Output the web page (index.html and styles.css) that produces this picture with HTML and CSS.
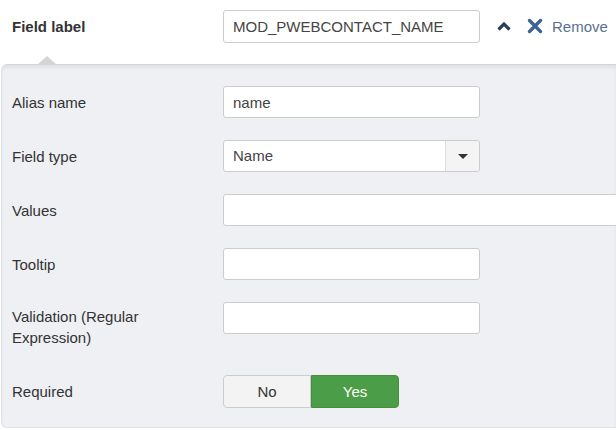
FILE: index.html
```html
<!DOCTYPE html>
<html lang="en">
<head>
    <meta charset="UTF-8">
    <title>Field settings</title>
    <link rel="stylesheet" href="styles.css">
</head>
<body>
    <div class="field-head">
        <label class="head-label" for="field_label">Field label</label>
        <input type="text" id="field_label" class="text-input" value="MOD_PWEBCONTACT_NAME">
        <div class="head-actions">
            <a href="#" class="icon-up" title="Collapse">
                <svg width="14" height="10" viewBox="0 0 14 10"><path d="M1.5 8.5 L7 3 L12.5 8.5" fill="none" stroke="#2d3e5c" stroke-width="3.2"/></svg>
            </a>
            <a href="#" class="remove">
                <svg width="16" height="16" viewBox="0 0 16 16"><path d="M2.5 2.5 L13.5 13.5 M13.5 2.5 L2.5 13.5" fill="none" stroke="#3e6196" stroke-width="3.4" stroke-linecap="round"/></svg>
                <span>Remove</span>
            </a>
        </div>
    </div>

    <div class="panel">
        <div class="form-row">
            <label for="alias">Alias name</label>
            <input type="text" id="alias" class="text-input" value="name">
        </div>
        <div class="form-row">
            <label for="type">Field type</label>
            <div class="select-box">
                <span class="select-value">Name</span>
                <span class="select-btn"><i class="caret"></i></span>
            </div>
        </div>
        <div class="form-row">
            <label for="values">Values</label>
            <input type="text" id="values" class="text-input wide">
        </div>
        <div class="form-row">
            <label for="tooltip">Tooltip</label>
            <input type="text" id="tooltip" class="text-input">
        </div>
        <div class="form-row tall">
            <label for="validation">Validation (Regular Expression)</label>
            <input type="text" id="validation" class="text-input">
        </div>
        <div class="form-row">
            <label>Required</label>
            <div class="toggle">
                <button class="toggle-btn">No</button>
                <button class="toggle-btn active">Yes</button>
            </div>
        </div>
    </div>
</body>
</html>
```

FILE: styles.css
```css
body {
    font-family: "Liberation Sans", Arial, sans-serif;
    font-size: 15px;
    color: #333;
    margin: 0;
    padding: 0;
    background-color: #fff;
}
.field-head {
    display: flex;
    align-items: center;
    height: 52px;
    padding-left: 12px;
}
.head-label {
    width: 211px;
    font-weight: bold;
    color: #333;
}
.text-input {
    box-sizing: border-box;
    flex-shrink: 0;
    width: 257px;
    height: 33px;
    padding: 4px 9px;
    font-family: inherit;
    font-size: 15px;
    color: #444;
    background-color: #fff;
    border: 1px solid #ccc;
    border-radius: 3px;
}
.text-input.wide {
    width: 420px;
}
.head-actions {
    display: flex;
    align-items: center;
    margin-left: 17px;
}
.head-actions a {
    text-decoration: none;
    display: flex;
    align-items: center;
}
.icon-up {
    margin-right: 16px;
}
.remove svg {
    margin-right: 9px;
}
.remove span {
    color: #5a7092;
    font-size: 15px;
}
.panel {
    margin: 12px 0 0 1px;
    padding: 21px 0 0 10px;
    height: 364px;
    box-sizing: border-box;
    overflow: hidden;
    background-color: #eef0f4;
    border-top: 1px solid #d4d6da;
    border-left: 1px solid #e0e2e6;
    border-bottom: 1px solid #e0e2e6;
    border-radius: 6px 0 0 6px;
    box-shadow: inset 0 3px 3px rgba(0, 0, 0, 0.06);
}
body::after {
    content: "";
    position: absolute;
    left: 38px;
    top: 56px;
    border-left: 9px solid transparent;
    border-right: 9px solid transparent;
    border-bottom: 8px solid #d2d4d8;
}
.form-row {
    display: flex;
    align-items: center;
    margin-bottom: 22px;
}
.form-row label {
    width: 211px;
    flex-shrink: 0;
}
.form-row.tall {
    align-items: flex-start;
    margin-bottom: 27px;
}
.form-row.tall label {
    width: 150px;
    margin-right: 61px;
    padding-top: 4px;
    line-height: 21px;
}
.form-row .text-input {
    height: 32px;
}
.select-box {
    box-sizing: border-box;
    display: flex;
    width: 257px;
    height: 32px;
    background-color: #fff;
    border: 1px solid #ccc;
    border-radius: 3px;
}
.select-value {
    flex: 1;
    padding: 0 9px;
    line-height: 30px;
    color: #444;
}
.select-btn {
    width: 33px;
    display: flex;
    align-items: center;
    justify-content: center;
    background-color: #f4f4f4;
    border-left: 1px solid #ddd;
    border-radius: 0 3px 3px 0;
}
.caret {
    border-left: 5px solid transparent;
    border-right: 5px solid transparent;
    border-top: 5px solid #333;
}
.toggle {
    display: flex;
}
.toggle-btn {
    width: 88px;
    height: 33px;
    font-family: inherit;
    font-size: 15px;
    color: #333;
    background-color: #f3f3f3;
    border: 1px solid #ccc;
    border-radius: 4px 0 0 4px;
}
.toggle-btn.active {
    color: #fff;
    background-color: #4b9e47;
    border-color: #44903f;
    border-radius: 0 4px 4px 0;
}
```
